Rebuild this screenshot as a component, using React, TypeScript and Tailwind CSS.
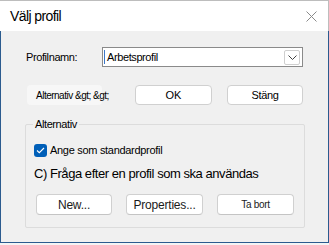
import React from 'react';

const font = { fontFamily: '"Liberation Sans", Arial, sans-serif' };

const Btn: React.FC<{ label: string; w: string; small?: boolean }> = ({ label, w, small }) => (
  <button
    className={`${w} h-[21px] rounded-[4px] border border-[#d0d0d0] border-b-[#c4c4c4] bg-white text-[#1a1a1a] flex items-center justify-center ${
      small ? 'text-[10px] tracking-[-0.3px]' : 'text-[12px] tracking-[-0.2px]'
    }`}
  >
    {label}
  </button>
);

const App: React.FC = () => {
  return (
    <div className="w-[329px] h-[245px] bg-[#f4f4f4] overflow-hidden" style={font}>
      <div className="w-[329px] h-[243px] flex flex-col">
        {/* Title bar */}
        <div className="h-[31px] flex items-center justify-between bg-white border-t border-r border-[#bdbdbd] pl-[10px] pr-[10px]">
          <span className="text-[14px] text-black tracking-[-0.6px]">Välj profil</span>
          <svg width="11" height="11" viewBox="0 0 11 11" className="mr-[1px]">
            <path d="M0.5 0.5 L10.5 10.5 M10.5 0.5 L0.5 10.5" stroke="#8a8a8a" strokeWidth="1" />
          </svg>
        </div>

        {/* Body */}
        <div className="flex-1 bg-[#f0f0f0] border-l border-r border-b border-[#2b5b8f] flex flex-col pl-[24px] pr-[24px]">
          {/* Profile name row */}
          <div className="mt-[16px] h-[20px] flex items-center">
            <span className="w-[77px] pl-[1px] text-[11px] text-black tracking-[-0.4px]">Profilnamn:</span>
            <div className="w-[201px] h-[20px] bg-white border border-[#8a8a8a] flex items-center pl-[1px] pr-[2px]">
              <span className="w-[1px] h-[14px] bg-[#3c78c8]" />
              <span className="ml-[2px] flex-1 text-[11px] text-black tracking-[-0.4px]">Arbetsprofil</span>
              <div className="w-[16px] h-[15px] border border-[#cfcfcf] rounded-[2px] bg-white flex items-center justify-center">
                <svg width="9" height="5" viewBox="0 0 9 5">
                  <path d="M0.5 0.5 L4.5 4.5 L8.5 0.5" stroke="#444" strokeWidth="1" fill="none" />
                </svg>
              </div>
            </div>
          </div>

          {/* Buttons row */}
          <div className="mt-[18px] h-[20px] flex items-center">
            <div className="ml-[2px] w-[75px] h-[20px] rounded-[4px] bg-[#f7f7f7] flex items-center pl-[9px] whitespace-nowrap overflow-visible text-[10px] text-black tracking-[-0.5px]">
              Alternativ &amp;gt; &amp;gt;
            </div>
            <button className="ml-[33px] w-[77px] h-[20px] rounded-[4px] border border-[#d0d0d0] bg-white text-[11px] text-black">
              OK
            </button>
            <button className="ml-[15px] w-[76px] h-[20px] rounded-[4px] border border-[#d0d0d0] bg-white text-[11px] text-black tracking-[-0.3px]">
              Stäng
            </button>
          </div>

          {/* Group box */}
          <div className="relative mt-[19px] w-[280px] h-[104px] border border-[#dcdcdc] rounded-[2px] flex flex-col pl-[8px]">
            <span className="absolute left-[7px] top-[-8px] px-[2px] bg-[#f0f0f0] text-[11px] text-black tracking-[-0.4px] leading-[14px]">
              Alternativ
            </span>
            <div className="mt-[18px] h-[14px] flex items-center">
              <span className="w-[13px] h-[13px] rounded-[3px] bg-[#005fb8] flex items-center justify-center">
                <svg width="9" height="7" viewBox="0 0 9 7">
                  <path d="M1 3.5 L3.3 5.7 L8 1" stroke="white" strokeWidth="1.1" fill="none" />
                </svg>
              </span>
              <span className="ml-[3px] text-[11px] text-black tracking-[-0.3px]">Ange som standardprofil</span>
            </div>
            <div className="mt-[9px] h-[16px] flex items-center text-[13px] text-black tracking-[-0.45px] whitespace-nowrap">
              C) Fråga efter en profil som ska användas
            </div>
            <div className="mt-[12px] flex items-center pl-[2px]">
              <Btn label="New..." w="w-[76px]" />
              <span className="w-[14px]" />
              <Btn label="Properties..." w="w-[77px]" />
              <span className="w-[14px]" />
              <Btn label="Ta bort" w="w-[77px]" small />
            </div>
          </div>
        </div>
      </div>
    </div>
  );
};

export default App;
